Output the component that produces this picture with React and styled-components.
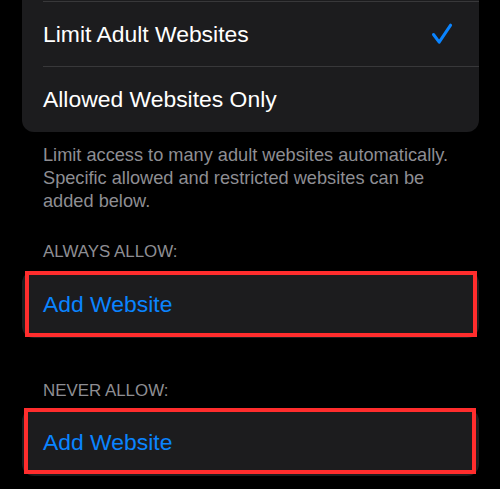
import React from 'react';
import styled, { createGlobalStyle } from 'styled-components';

const GlobalStyle = createGlobalStyle`
  html, body {
    margin: 0;
    padding: 0;
    background: #000;
  }
  body {
    font-family: "Liberation Sans", Arial, sans-serif;
    -webkit-font-smoothing: antialiased;
  }
`;

export const Page = styled.div`
  width: 500px;
  height: 489px;
  overflow: hidden;
  background: #000;
  padding: 0 21px 0 22px;
  box-sizing: border-box;
  display: flex;
  flex-direction: column;
`;

export const Card = styled.div`
  position: relative;
  background: #1c1c1e;
  border-radius: ${(p) => (p.$flatTop ? '0 0 12px 12px' : '12px')};
  padding-top: ${(p) => p.$padTop || 0}px;
  margin-top: ${(p) => p.$mt || 0}px;
  display: flex;
  flex-direction: column;
`;

export const Divider = styled.div`
  height: 1px;
  margin-left: 21px;
  background: #38383a;
`;

export const Row = styled.div`
  height: ${(p) => p.$h}px;
  display: flex;
  align-items: center;
  justify-content: space-between;
  padding: 0 26px 0 21px;
  font-size: 22.9px;
  color: ${(p) => (p.$action ? '#0a84ff' : '#ffffff')};
`;

export const Footer = styled.p`
  margin: 11.5px 0 0;
  padding: 0 21px;
  font-size: 18.2px;
  line-height: 23px;
  color: #8e8e93;
`;

export const SectionHeader = styled.div`
  margin-top: ${(p) => p.$mt}px;
  padding: 0 21px;
  font-size: 16.9px;
  line-height: 20px;
  color: #8e8e93;
  text-transform: uppercase;
`;

export const Highlight = styled.div`
  position: absolute;
  top: ${(p) => p.$t}px;
  bottom: ${(p) => p.$b}px;
  left: ${(p) => p.$l}px;
  right: ${(p) => p.$r}px;
  border: 4px solid #ff2d2d;
  pointer-events: none;
`;

const Check = () => (
  <svg width="22" height="22" viewBox="0 0 22 22" fill="none">
    <path
      d="M2.5 11.5 L8.2 19.2 L19.6 2.2"
      stroke="#0a84ff"
      strokeWidth="3"
      strokeLinecap="round"
      strokeLinejoin="round"
    />
  </svg>
);

export default function App() {
  return (
    <>
      <GlobalStyle />
      <Page>
        <Card $flatTop $padTop={1}>
          <Divider />
          <Row $h={64}>
            <span>Limit Adult Websites</span>
            <Check />
          </Row>
          <Divider />
          <Row $h={65}>
            <span>Allowed Websites Only</span>
          </Row>
        </Card>
        <Footer>
          Limit access to many adult websites automatically. Specific allowed and
          restricted websites can be added below.
        </Footer>

        <SectionHeader $mt={29}>Always Allow:</SectionHeader>
        <Card $mt={9}>
          <Row $h={67} $action>Add Website</Row>
          <Highlight $t={0.5} $b={0.5} $l={3} $r={2} />
        </Card>

        <SectionHeader $mt={43.5}>Never Allow:</SectionHeader>
        <Card $mt={8}>
          <Row $h={67} $action>Add Website</Row>
          <Highlight $t={-1} $b={2} $l={2} $r={3} />
        </Card>
      </Page>
    </>
  );
}
